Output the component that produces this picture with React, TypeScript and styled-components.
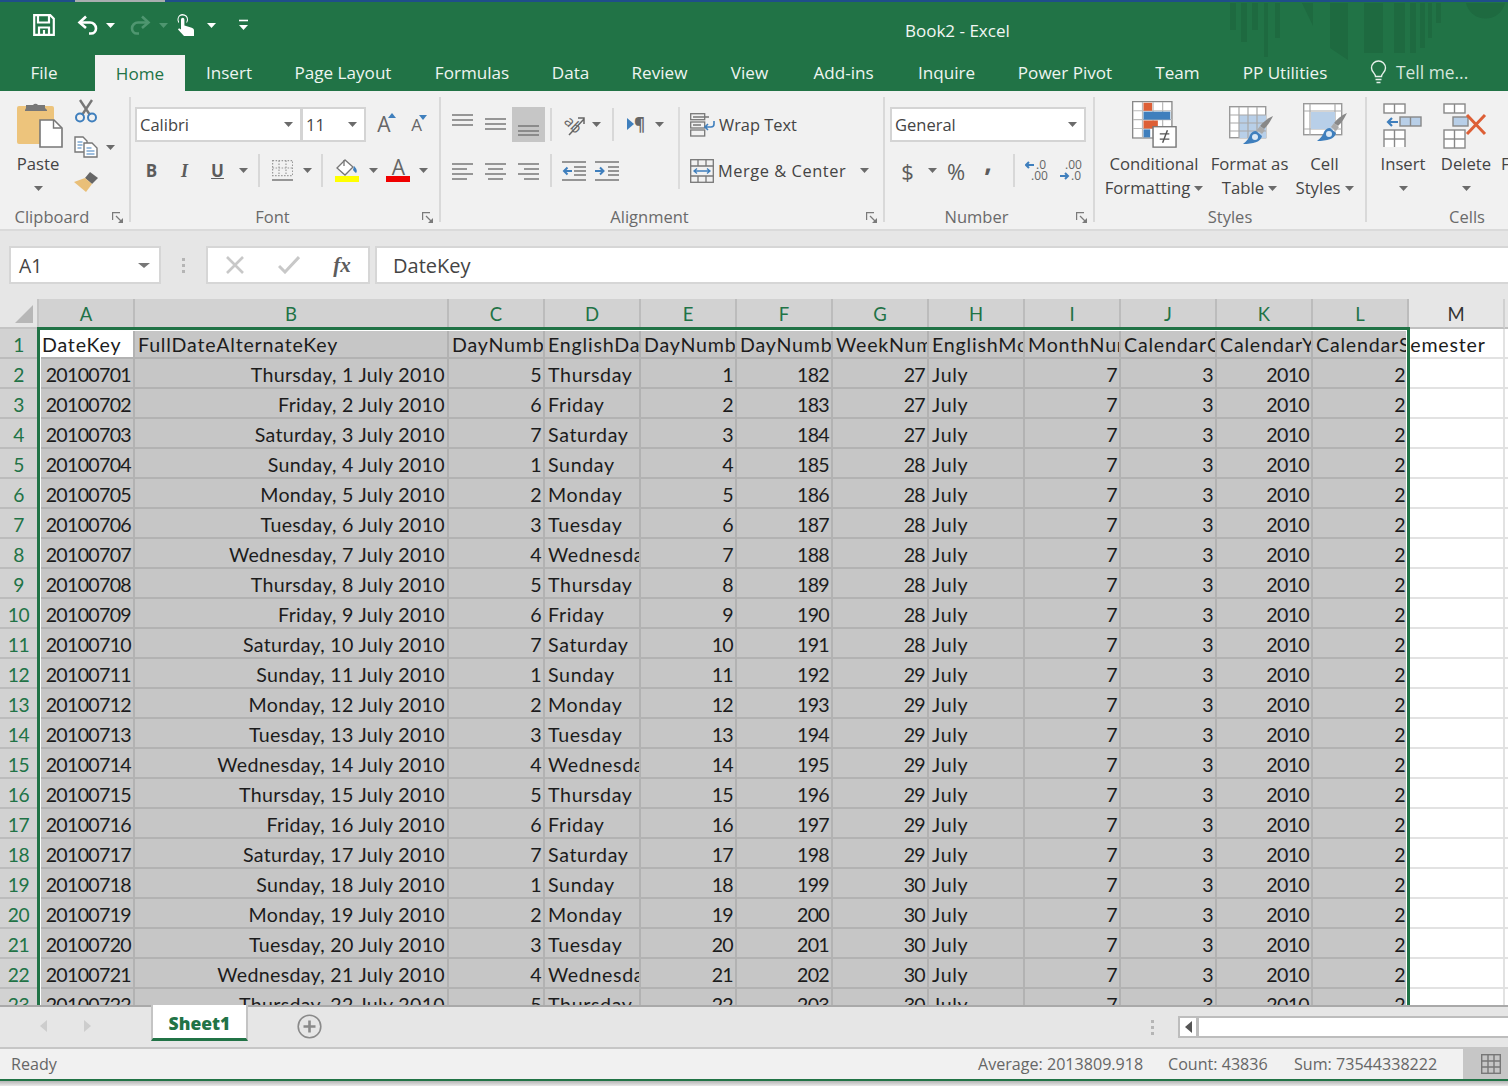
import React from "react";
import styled, { createGlobalStyle } from "styled-components";

const GRAY = "#6b6b6b";
const BLUE = "#3f7fbd";
const UI = `"Open Sans", "Noto Sans", sans-serif`;
const CELL = `Lato, "Liberation Sans", sans-serif`;

const Global = createGlobalStyle`
  html, body { margin: 0; padding: 0; background: #fff; }
  * { box-sizing: border-box; }
`;

const Page = styled.div`
  width: 1508px; height: 1086px; overflow: hidden; display: flex; flex-direction: column;
  font-family: ${UI}; background: #e6e6e6; position: relative;
`;
const TopStrip = styled.div`height: 2px; background: linear-gradient(90deg, #1f4e8a 75px, #a9aeb0 75px, #a9aeb0 165px, #1f4e8a 165px);`;
const TitleBar = styled.div`height: 50px; background: #217346; display: flex; align-items: center; position: relative; flex: none;`;
const Qat = styled.div`width: 250px; display: flex; align-items: center; padding-left: 32px; height: 46px; margin-top: -4px;`;
const Slot = styled.div<{ $w: number }>`
  width: ${(p) => p.$w}px; flex: none; display: flex; align-items: center; justify-content: center; height: 100%;
`;
const Title = styled.div`margin-left: 655px; color: #f2f7f4; font-size: 17px; padding-top: 7px;`;
const Pattern = styled.svg`position: absolute; right: 0; top: 0;`;
const TabBar = styled.div`height: 39px; background: #217346; display: flex; align-items: flex-end; flex: none;`;
const Tab = styled.div<{ $w: number; $active?: boolean }>`
  width: ${(p) => p.$w}px; flex: none; height: ${(p) => (p.$active ? 36 : 39)}px; display: flex; align-items: center; justify-content: center;
  padding-top: ${(p) => (p.$active ? 0 : 2)}px; font-size: 17.1px; white-space: nowrap;
  color: ${(p) => (p.$active ? "#217346" : "#eef5f1")};
  background: ${(p) => (p.$active ? "#f1f1f1" : "transparent")};
`;
const TellMe = styled.div`display: flex; align-items: center; gap: 9px; margin-left: 21px; color: #d5e6dc; font-size: 17.4px; height: 39px; padding-top: 1px;`;

const Ribbon = styled.div`
  height: 140px; background: #f1f1f1; border-bottom: 2px solid #dadada; display: flex; flex: none; overflow: hidden;
`;
const Group = styled.div<{ $w: number }>`
  width: ${(p) => p.$w}px; flex: none; height: 138px; display: flex; flex-direction: column;
`;
const GroupBody = styled.div<{ $pad?: number }>`
  height: 114px; display: flex; padding-left: ${(p) => p.$pad ?? 0}px; flex: none;
`;
const GroupFooter = styled.div`flex: 1; display: flex; align-items: center; padding-bottom: 3px;`;
const GroupLabel = styled.div`flex: 1; text-align: center; font-size: 16.5px; color: #6a6a6a; white-space: nowrap;`;
const Launcher = styled.div`width: 25px; flex: none; display: flex; justify-content: center; padding-left: 2px; padding-top: 2px;`;
const GroupDivider = styled.div`width: 2px; flex: none; margin: 6px 0 7px; background: #d9d9d9;`;
const LargeButton = styled.div<{ $w: number; $top?: number; $lead?: number; $start?: boolean }>`
  width: ${(p) => p.$w}px; flex: none; display: flex; flex-direction: column; align-items: ${(p) => (p.$start ? "flex-start" : "center")}; padding-top: ${(p) => p.$top ?? 10}px;
  margin-left: ${(p) => p.$lead ?? 0}px;
  font-size: 16.7px; line-height: 24px; color: #444; white-space: nowrap;
`;
const LargeIcon = styled.div<{ $h?: number; $shift?: number }>`
  height: ${(p) => p.$h ?? 51}px; display: flex; align-items: flex-start; justify-content: center; margin-left: ${(p) => p.$shift ?? 0}px;
`;
const CaretLine = styled.span`display: flex; align-items: center; gap: 4px; height: 24px;`;
const SmallStack = styled.div`width: 48px; flex: none; margin-left: 12px; display: flex; flex-direction: column; padding-top: 8px; gap: 12px;`;
const SmallRow = styled.div`height: 24px; display: flex; align-items: center; gap: 8px;`;
const Rows = styled.div<{ $w?: number }>`
  ${(p) => (p.$w ? `width:${p.$w}px;flex:none;` : "")} display: flex; flex-direction: column; gap: 11px; padding-top: 16px;
`;
const ToolRow = styled.div`height: 35px; display: flex; align-items: center;`;
const Combo = styled.div<{ $w: number }>`
  width: ${(p) => p.$w}px; flex: none; height: 35px; background: #fff; border: 2px solid #d4d4d4; display: flex; align-items: center; justify-content: space-between;
  padding: 0 7px 0 3px; font-size: 16.5px; color: #444; margin-right: -1px;
`;
const Sep = styled.div`width: 2px; height: 33px; background: #d8d8d8; flex: none;`;
const TallSep = styled.div`width: 2px; height: 82px; background: #dcdcdc; flex: none; margin: 16px 10px 0 0;`;
const Glyph = styled.span<{ $size?: number; $bold?: boolean; $italic?: boolean; $under?: boolean; $serif?: boolean }>`
  font-size: ${(p) => p.$size ?? 18}px; color: #5c5c5c; line-height: 1;
  font-weight: ${(p) => (p.$bold ? 700 : 400)}; font-style: ${(p) => (p.$italic ? "italic" : "normal")};
  font-family: ${(p) => (p.$serif ? `"Liberation Serif", serif` : UI)};
  text-decoration: ${(p) => (p.$under ? "underline" : "none")};
`;
const CommaGlyph = styled(Glyph)`margin-top: -19px;`;
const PasteLabel = styled.span`margin-top: 0;`;
const PasteArt = styled.div`margin-left: 3px;`;
const Highlight = styled.div`width: 33px; height: 35px; background: #c6c6c6; flex: none; display: flex; align-items: center; justify-content: center;`;
const WrapLabel = styled.div`font-size: 16.4px; color: #444; white-space: nowrap; margin-left: 4px;`;
const MergeLabel = styled(WrapLabel)`letter-spacing: 0.55px;`;
const Growing = styled.div`position: relative; display: flex; align-items: center;`;
const GrowTip = styled.svg`position: absolute; right: -5px; top: -1px;`;
const AGlyph = styled(Glyph)`color: #666;`;

const FormulaBar = styled.div`height: 68px; flex: none; display: flex; padding-top: 15px; padding-left: 9px; background: #e6e6e6;`;
const NameBox = styled.div`
  width: 152px; height: 38px; background: #fff; border: 2px solid #d6d6d6; display: flex; align-items: center; justify-content: space-between;
  padding: 0 9px 0 8px; font-size: 19.4px; color: #444;
`;
const Grip = styled.div<{ $h?: number; $w?: number }>`
  width: ${(p) => p.$w ?? 46}px; flex: none; height: ${(p) => p.$h ?? 38}px; display: flex; flex-direction: column; align-items: center; justify-content: center; gap: 3px;
  & > i { display: block; width: 3px; height: 3px; background: #b5b5b5; }
`;
const FxBox = styled.div`
  width: 164px; height: 38px; background: #fff; border: 2px solid #d6d6d6; display: flex; align-items: center; margin-right: 5px; flex: none;
`;
const FormulaInput = styled.div`
  flex: 1; height: 38px; background: #fff; border: 2px solid #d6d6d6; border-right: none; display: flex; align-items: center;
  padding-left: 16px; font-size: 20px; color: #444;
`;

const SheetArea = styled.div`height: 706px; flex: none; overflow: hidden; position: relative; background: #fff;`;
const Grid = styled.div`
  display: grid; grid-template-columns: 39px 96px 314px repeat(11, 96px) 96px; grid-auto-rows: 30px; grid-template-rows: 30px;
  font-family: ${CELL}; font-size: 19.6px; color: #1c1c1c;
`;
const Corner = styled.div`background: #e6e6e6; border-right: 2px solid #c4c4c4; border-bottom: 2px solid #c4c4c4; position: relative; display: flex; justify-content: flex-end; align-items: flex-end; padding: 0 4px 4px 0;`;
const ColHead = styled.div<{ $sel: boolean }>`
  background: ${(p) => (p.$sel ? "#d2d2d2" : "#e6e6e6")};
  color: ${(p) => (p.$sel ? "#217346" : "#333")};
  border-right: 2px solid ${(p) => (p.$sel ? "#bcbcbc" : "#d0d0d0")};
  border-bottom: 2px solid ${(p) => (p.$sel ? "#217346" : "#c0c0c0")};
  display: flex; align-items: center; justify-content: center; font-size: 18.5px; padding-top: 1px;
`;
const RowHead = styled.div`
  background: #d2d2d2; color: #217346; border-bottom: 2px solid #bcbcbc; display: flex; align-items: center; justify-content: center;
  padding: 2px 2px 0 0; font-size: 19.2px; letter-spacing: -0.5px;
`;
type Kind = "num" | "date" | "text" | "head";
const SPACING: Record<Kind, string> = { num: "-0.7px", date: "0.32px", text: "0.65px", head: "0.8px" };
const Cell = styled.div<{ $kind?: Kind; $sel?: boolean; $active?: boolean; $spill?: boolean }>`
  background: ${(p) => (p.$active || !p.$sel ? "#fff" : "#c6c6c6")};
  border-right: 2px solid ${(p) => (p.$sel ? "#b2b2b2" : "#e2e2e2")};
  border-bottom: 2px solid ${(p) => (p.$sel ? "#b2b2b2" : "#e2e2e2")};
  overflow: ${(p) => (p.$spill ? "visible" : "hidden")};
  ${(p) => (p.$spill ? "position: relative; z-index: 1;" : "")}
  white-space: nowrap; display: flex; align-items: center;
  letter-spacing: ${(p) => SPACING[p.$kind ?? "text"]};
  justify-content: ${(p) => (p.$kind === "num" || p.$kind === "date" ? "flex-end" : "flex-start")};
  padding: 2px ${(p) => (p.$kind === "num" || p.$kind === "date" ? 2 : 0)}px 0 3px;
`;
const Selection = styled.div`
  position: absolute; left: 37px; top: 28px; width: 1373px; height: 700px; border: 3px solid #217346; z-index: 2; pointer-events: none;
  box-shadow: inset 0 0 0 1px #fff;
`;

const SheetTabs = styled.div`height: 42px; flex: none; background: #e6e6e6; border-top: 2px solid #a9a9a9; display: flex; align-items: flex-start;`;
const NavArrows = styled.div`width: 151px; flex: none; height: 38px; display: flex; align-items: center; padding-left: 40px; gap: 37px;`;
const SheetTab = styled.div`
  width: 97px; height: 36px; flex: none; background: #fff; border-right: 2px solid #c4c4c4; border-left: 2px solid #c4c4c4; border-bottom: 3px solid #217346;
  display: flex; align-items: center; justify-content: center; font-weight: 800; color: #217346; font-size: 17.5px; margin-top: -2px; padding-top: 3px;
`;
const AddSheet = styled.div`width: 125px; flex: none; height: 38px; display: flex; align-items: center; padding-left: 49px;`;
const Spacer = styled.div`flex: 1;`;
const ScrollBar = styled.div`
  width: 330px; height: 22px; flex: none; margin-top: 9px; background: #fff; border: 2px solid #bdbdbd; border-right: none; display: flex; align-items: center;
`;
const ScrollBtn = styled.div`width: 19px; height: 100%; border-right: 3px solid #bdbdbd; display: flex; align-items: center; justify-content: center;`;
const StatusBar = styled.div`height: 32px; flex: none; background: #f1f1f1; border-top: 2px solid #c6c6c6; display: flex; align-items: center; font-size: 16.1px; color: #666; padding-left: 11px;`;
const StatusRight = styled.div`margin-left: auto; display: flex; align-items: center; height: 100%;`;
const StatusItem = styled.span<{ $w: number }>`width: ${(p) => p.$w}px; white-space: nowrap;`;
const ViewBtn = styled.div`width: 45px; height: 100%; background: #c6c6c6; display: flex; align-items: center; justify-content: center; padding-left: 11px;`;
const BottomEdge = styled.div`height: 7px; flex: none; border-top: 2px solid #217346; background: linear-gradient(#b5b5b5, #e8e8e8);`;
const RedoArt = styled.div`transform: scaleX(-1); display: flex;`;

/* icons */
const Caret = ({ c = GRAY, w = 9 }: { c?: string; w?: number }) => (
  <svg width={w} height={5} viewBox="0 0 9 5" preserveAspectRatio="none"><path d="M0 0h9L4.500 5z" fill={c} /></svg>
);
const SaveIcon = () => (
  <svg width="22" height="22" viewBox="0 0 22 22" fill="none" stroke="#fff" strokeWidth="2.200">
    <path d="M1.200 1.200h16l3.600 3.600v16H1.200z" /><path d="M5 1.500v7h11v-7" /><path d="M6 20.500v-7h10v7" /><path d="M11 16v4" />
  </svg>
);
const UndoIcon = ({ c = "#fff" }: { c?: string }) => (
  <svg width="22" height="20" viewBox="0 0 22 20" fill="none" stroke={c} strokeWidth="2.600">
    <path d="M9 1.500 2.500 7.500 9 13" /><path d="M3 7.500h10a6 6 0 0 1 6 6 5 5 0 0 1-5 5h-2" />
  </svg>
);
const TouchIcon = () => (
  <svg width="20" height="24" viewBox="0 0 20 24" fill="#fff">
    <path d="M6.500 1a5.500 5.500 0 0 1 5.500 5.500c0 1.500-.6 2.800-1.500 3.800V8.600c.3-.6.500-1.300.500-2A4.500 4.500 0 0 0 6.500 2.500 4 4 0 0 0 2.500 6.500c0 .7.200 1.400.500 2v1.700A5.500 5.500 0 0 1 6.500 1z" />
    <path d="M5 6.500a1.700 1.700 0 0 1 3.400 0v6l6.600 2c1.700.6 3 1.200 3 3V23H8l-6-6.500 1-1.300 2 1.200z" />
  </svg>
);
const CustomizeIcon = () => (
  <svg width="9" height="12" viewBox="0 0 9 12"><path d="M0 1.500h9" stroke="#fff" strokeWidth="1.600" /><path d="M0 6h9l-4.500 5z" fill="#fff" /></svg>
);
const Bulb = () => (
  <svg width="17" height="24" viewBox="0 0 17 24" fill="none" stroke="#e6f0ea" strokeWidth="1.400">
    <path d="M5.500 16.500c0-3-4-4.500-4-8.500a7 7 0 0 1 14 0c0 4-4 5.500-4 8.500z" /><path d="M5.500 19.500h6M6.500 22.500h4" />
  </svg>
);
const PasteIcon = () => (
  <svg width="46" height="47" viewBox="0 0 46 47">
    <rect x="0" y="5" width="37" height="38" rx="2" fill="#edc47c" />
    <path d="M9 7V4h7a3 3 0 0 1 5 0h7v3l2 2v1H8V9z" fill="#777" />
    <path d="M23 19h14l8 8v19H23z" fill="#fff" stroke="#777" strokeWidth="1.600" />
    <path d="M36.500 19v8h8" fill="none" stroke="#777" strokeWidth="1.400" />
  </svg>
);
const ScissorsIcon = () => (
  <svg width="24" height="24" viewBox="0 0 24 24" fill="none">
    <path d="M6 1l10 15M18 1 8 16" stroke="#777" strokeWidth="2.400" />
    <circle cx="6" cy="18.500" r="4" stroke={BLUE} strokeWidth="2" /><circle cx="18" cy="18.500" r="4" stroke={BLUE} strokeWidth="2" />
  </svg>
);
const CopyIcon = () => (
  <svg width="24" height="22" viewBox="0 0 24 22" fill="#fff" stroke="#777" strokeWidth="1.400">
    <path d="M1 1h8l4 4v11H1z" /><path d="M10 7h8l5 5v9H10z" />
    <path d="M3.500 6h5M3.500 9h5M3.500 12h4M12.500 12h5M12.500 15h8M12.500 18h8" stroke={BLUE} strokeWidth="1.200" />
  </svg>
);
const BrushIcon = () => (
  <svg width="25" height="24" viewBox="0 0 25 24">
    <path d="M16 1l8 6-6 6-7-6z" fill="#666" /><path d="M11 7l7 6-6 8L0 11z" fill="#e9bf78" />
  </svg>
);
const LauncherIcon = () => (
  <svg width="12" height="12" viewBox="0 0 12 12" fill="none" stroke="#7a7a7a" strokeWidth="1.200">
    <path d="M.6 8V.6h7.400" /><path d="M4 4l6 6" /><path d="M11 6v5H6z" fill="#7a7a7a" stroke="none" />
  </svg>
);
const BigA = ({ s, up }: { s: number; up?: boolean }) => (
  <Growing>
    <AGlyph $size={s}>A</AGlyph>
    <GrowTip width="8" height="5" viewBox="0 0 8 5">
      <path d={up ? "M0 5h8L4 0z" : "M0 0h8L4 5z"} fill={BLUE} />
    </GrowTip>
  </Growing>
);
const BordersIcon = () => (
  <svg width="21" height="21" viewBox="0 0 21 21" fill="none" stroke="#999" strokeWidth="1.200" strokeDasharray="1.500 1.500">
    <path d="M.6.6h20v15h-20zM7 .6v15M14 .6v15M.6 8h20" /><path d="M0 20h21" stroke="#777" strokeDasharray="none" strokeWidth="1.500" />
  </svg>
);
const FillIcon = () => (
  <svg width="25" height="23" viewBox="0 0 25 23">
    <path d="M10 1 2 9l8 7 8-8z" fill="#fff" stroke="#777" strokeWidth="1.300" />
    <path d="M9 1v6" stroke="#777" strokeWidth="1.300" />
    <path d="M19 7c2 2 4 5 2 7-1.500-1-2-2-3-3z" fill={BLUE} />
    <rect x="0" y="17" width="24" height="6" fill="#ffff00" />
  </svg>
);
const ColorA = () => (
  <svg width="25" height="24" viewBox="0 0 25 24">
    <text x="12.500" y="16" textAnchor="middle" fontSize="21" fontFamily={UI} fill="#666">A</text>
    <rect x="0" y="17" width="24" height="6" fill="#f00000" />
  </svg>
);
const Lines = ({ ys, xs }: { ys: number[]; xs?: [number, number][] }) => (
  <svg width="22" height="22" viewBox="0 0 22 22" stroke="#777" strokeWidth="1.500">
    {ys.map((y, i) => {
      const x = xs ? xs[i] : ([0, 21] as [number, number]);
      return <path key={y} d={`M${x[0]} ${y}H${x[1]}`} />;
    })}
  </svg>
);
const Orient = () => (
  <svg width="26" height="24" viewBox="0 0 26 24">
    <text x="2" y="14" fontSize="15" fontFamily={UI} fill="#666" transform="rotate(45 8 12)">ab</text>
    <path d="M8 22 23 6M17 5h6v6" fill="none" stroke="#666" strokeWidth="1.500" />
  </svg>
);
const IndentIcon = ({ out }: { out?: boolean }) => (
  <svg width="25" height="20" viewBox="0 0 25 20" fill="none" stroke="#777" strokeWidth="1.500">
    <path d="M0 1h24M0 19h24" />
    {out ? <path d="M12 6h12M12 10h12M12 14h12" /> : <path d="M13 6h11M13 10h11M13 14h11" />}
    {out ? <path d="M10 10H2M5.500 6.500 2 10l3.500 3.500" stroke={BLUE} strokeWidth="2" /> : <path d="M0 10h8M5 6.500 8.500 10 5 13.500" stroke={BLUE} strokeWidth="2" />}
  </svg>
);
const WrapIcon = () => (
  <svg width="25" height="24" viewBox="0 0 25 24" fill="none" stroke="#777" strokeWidth="1.300">
    <rect x=".7" y=".7" width="14" height="6" /><rect x=".7" y="9" width="14" height="6" /><rect x=".7" y="17" width="14" height="6" />
    <path d="M3 12h8M3 4h16" /><path d="M24 8v3a3 3 0 0 1-3 3h-6M18 11l-3 3 3 3" stroke={BLUE} strokeWidth="1.600" />
  </svg>
);
const MergeIcon = () => (
  <svg width="24" height="24" viewBox="0 0 24 24" fill="none" stroke="#777" strokeWidth="1.300">
    <rect x=".7" y=".7" width="22.600" height="22.600" /><path d="M.7 7h22.600M.7 17h22.600M8 .7V7M16 .7V7M8 17v6M16 17v6" />
    <path d="M4 12h16M7 9.500 4 12l3 2.500M17 9.500l3 2.500-3 2.500" stroke={BLUE} strokeWidth="1.300" />
  </svg>
);
const DecIcon = ({ more }: { more?: boolean }) => (
  <svg width="24" height="24" viewBox="0 0 24 24">
    <text x={more ? 6 : 11} y="10" fontSize="12" fontFamily={UI} fill="#666">{more ? ".00" : ".0"}</text>
    <text x={more ? 12 : 6} y="21" fontSize="12" fontFamily={UI} fill="#666">{more ? ".0" : ".00"}</text>
    <path d={more ? "M1 17h8M6 14l3 3-3 3" : "M9 6H1M4 3 1 6l3 3"} fill="none" stroke={BLUE} strokeWidth="2" />
  </svg>
);
const CondIcon = () => (
  <svg width="45" height="47" viewBox="0 0 47 53" preserveAspectRatio="none" fill="none">
    <rect x=".7" y=".7" width="41" height="41" fill="#fff" stroke="#888" strokeWidth="1.400" />
    <path d="M11 1v40M22 1v40M32 1v40M1 11h41M1 21h41M1 31h41" stroke="#bbb" strokeWidth="1.300" />
    <rect x="12" y="2" width="9" height="9" fill="#dd5f36" /><rect x="12" y="12" width="28" height="9" fill={BLUE} />
    <rect x="12" y="22" width="15" height="9" fill="#dd5f36" /><rect x="12" y="32" width="7" height="9" fill={BLUE} />
    <rect x="22" y="29" width="24" height="23" fill="#fff" stroke="#777" strokeWidth="1.500" />
    <path d="M29 37h10M29 43h10M37 33l-5 14" stroke="#555" strokeWidth="1.500" />
  </svg>
);
const BrushTip = ({ x, y }: { x: number; y: number }) => (
  <g transform={`translate(${x} ${y})`}>
    <path d="M30 0c-3 6-5 9-9 13l-4-3c3-4 8-8 13-10z" fill="#888" />
    <path d="M17 10l5 4-3 4-5-4z" fill="#aaa" />
    <path d="M13 15l6 5c-1 6-9 8-19 8 4-3 6-6 7-9 1-2 3-4 6-4z" fill={BLUE} />
    <circle cx="12" cy="21" r="3" fill="#dbe8f5" />
  </g>
);
const TableIcon = () => (
  <svg width="47" height="44" viewBox="0 0 47 44" fill="none">
    <rect x=".7" y=".7" width="36" height="31" fill="#fff" stroke="#999" strokeWidth="1.400" />
    <rect x="10" y="9" width="27" height="23" fill="#b8cfe8" />
    <path d="M10 1v31M19 1v31M28 1v31M1 9h36M1 17h36M1 25h36" stroke="#a8a8a8" strokeWidth="1.200" />
    <BrushTip x={14} y={10} />
  </svg>
);
const CellStyleIcon = () => (
  <svg width="47" height="44" viewBox="0 0 47 44" fill="none">
    <rect x=".7" y=".7" width="38" height="31" fill="#fff" stroke="#999" strokeWidth="1.400" />
    <path d="M7 1v31M32 1v31M1 8h38M1 26h38" stroke="#aaa" strokeWidth="1.200" />
    <rect x="8" y="9" width="24" height="17" fill="#b8cfe8" />
    <BrushTip x={14} y={10} />
  </svg>
);
const SmallTable = ({ x, y, w = 21, h = 9, c = 2, r = 1, fill = "#fff" }: { x: number; y: number; w?: number; h?: number; c?: number; r?: number; fill?: string }) => (
  <g stroke="#888" strokeWidth="1.400" fill={fill}>
    <rect x={x} y={y} width={w} height={h * r} />
    {Array.from({ length: c - 1 }).map((_, i) => <path key={i} d={`M${x + (w * (i + 1)) / c} ${y}v${h * r}`} />)}
    {Array.from({ length: r - 1 }).map((_, i) => <path key={i} d={`M${x} ${y + h * (i + 1)}h${w}`} />)}
  </g>
);
const InsertIcon = () => (
  <svg width="40" height="44" viewBox="0 0 40 44" fill="none">
    <SmallTable x={1} y={1} />
    <path d="M15 19H5M9 15l-4 4 4 4" stroke={BLUE} strokeWidth="2.200" />
    <SmallTable x={17} y={14} fill="#b8cfe8" />
    <SmallTable x={1} y={27} r={2} />
  </svg>
);
const DeleteIcon = () => (
  <svg width="46" height="46" viewBox="0 0 46 46" fill="none">
    <SmallTable x={1} y={1} />
    <rect x="10" y="14" width="15" height="9" fill="#b8cfe8" stroke="#888" strokeWidth="1.400" />
    <SmallTable x={1} y={27} r={2} />
    <path d="M24 12l18 19M42 12 24 31" stroke="#dd5f36" strokeWidth="3" />
  </svg>
);
const CloseIcon = () => <svg width="18" height="18" viewBox="0 0 18 18"><path d="M1 1l16 16M17 1 1 17" stroke="#c8c8c8" strokeWidth="2.600" /></svg>;
const CheckIcon = () => <svg width="22" height="18" viewBox="0 0 22 18"><path d="M1 10l6 6L21 1" fill="none" stroke="#c8c8c8" strokeWidth="3" /></svg>;
const CornerTri = () => <svg width="18" height="18" viewBox="0 0 18 18"><path d="M18 0v18H0z" fill="#b7b7b7" /></svg>;
const NavArrow = ({ right }: { right?: boolean }) => (
  <svg width="7" height="12" viewBox="0 0 7 12"><path d={right ? "M0 0l7 6-7 6z" : "M7 0 0 6l7 6z"} fill="#cdcdcd" /></svg>
);
const PlusIcon = () => (
  <svg width="25" height="25" viewBox="0 0 25 25" fill="none" stroke="#8a8a8a">
    <circle cx="12.500" cy="12.500" r="11.300" strokeWidth="1.600" /><path d="M12.500 6.500v12M6.500 12.500h12" strokeWidth="2.600" />
  </svg>
);
const GridView = () => (
  <svg width="20" height="20" viewBox="0 0 20 20" fill="none" stroke="#777" strokeWidth="1.400">
    <rect x=".7" y=".7" width="18.600" height="18.600" /><path d="M7 1v18M13 1v18M1 7h18M1 13h18" />
  </svg>
);

/* data */
const LETTERS = "ABCDEFGHIJKLMN".split("");
const HEAD = ["DateKey", "FullDateAlternateKey", "DayNumberOfWeek", "EnglishDayNameOfWeek", "DayNumberOfMonth", "DayNumberOfYear", "WeekNumberOfYear", "EnglishMonthName", "MonthNumberOfYear", "CalendarQuarter", "CalendarYear", "CalendarSemester"];
const DAYS = ["Sunday", "Monday", "Tuesday", "Wednesday", "Thursday", "Friday", "Saturday"];
const TABS: [string, number][] = [["File", 88], ["", 7], ["Home", 90], ["Insert", 88], ["Page Layout", 140], ["Formulas", 118], ["Data", 79], ["Review", 99], ["View", 81], ["Add-ins", 107], ["Inquire", 99], ["Power Pivot", 138], ["Team", 87], ["PP Utilities", 128]];

const rows = Array.from({ length: 23 }).map((_, i) => {
  const day = i + 1;
  const dow = (day + 3) % 7;
  const week = day <= 3 ? 27 : day <= 10 ? 28 : day <= 17 ? 29 : 30;
  return [String(20100701 + i), `${DAYS[dow]}, ${day} July 2010`, String(dow + 1), DAYS[dow], String(day), String(182 + i), String(week), "July", "7", "3", "2010", "2"];
});
const kindOf = (ci: number): Kind => (ci === 1 ? "date" : ci === 3 || ci === 7 ? "text" : "num");

export default function App() {
  return (
    <Page>
      <Global />
      <TopStrip />
      <TitleBar>
        <Qat>
          <Slot $w={24}><SaveIcon /></Slot>
          <Slot $w={21} />
          <Slot $w={22}><UndoIcon /></Slot>
          <Slot $w={22}><Caret c="#fff" /></Slot>
          <Slot $w={8} />
          <Slot $w={22}><RedoArt><UndoIcon c="#4f9670" /></RedoArt></Slot>
          <Slot $w={24}><Caret c="#4f9670" /></Slot>
          <Slot $w={22}><TouchIcon /></Slot>
          <Slot $w={28}><Caret c="#fff" /></Slot>
          <Slot $w={14} />
          <Slot $w={9}><CustomizeIcon /></Slot>
        </Qat>
        <Title>Book2 - Excel</Title>
        <Pattern width="278" height="66" viewBox="0 0 278 66" fill="#1e6a40">
          <path d="M0 1h6v27H0zM11 1h6v39h-6zM22 1h6v27h-6zM34 1h4v54h-4zM45 1h5v35h-5zM72 1h11L83 24zM100 1h18v57l-18-12zM134 1h19v50h-19zM164 1h11v50h-11zM180 1h6v50h-6zM190 1h5v45h-5zM198 1h4v35h-4zM206 1h5v20h-5zM236 1h39a20 20 0 0 1-39 0z" />
        </Pattern>
      </TitleBar>
      <TabBar>
        {TABS.map(([t, w], i) => (
          <Tab key={i} $w={w} $active={t === "Home"}>{t}</Tab>
        ))}
        <TellMe><Bulb />Tell me...</TellMe>
      </TabBar>
      <Ribbon>
        <Group $w={129}>
          <GroupBody $pad={14}>
            <LargeButton $w={48}>
              <LargeIcon><PasteArt><PasteIcon /></PasteArt></LargeIcon>
              <PasteLabel>Paste</PasteLabel>
              <CaretLine><Caret /></CaretLine>
            </LargeButton>
            <SmallStack>
              <SmallRow><ScissorsIcon /></SmallRow>
              <SmallRow><CopyIcon /><Caret /></SmallRow>
              <SmallRow><BrushIcon /></SmallRow>
            </SmallStack>
          </GroupBody>
          <GroupFooter><GroupLabel>Clipboard</GroupLabel><Launcher><LauncherIcon /></Launcher></GroupFooter>
        </Group>
        <GroupDivider />
        <Group $w={308}>
          <GroupBody $pad={4}>
            <Rows>
              <ToolRow>
                <Combo $w={167}>Calibri<Caret /></Combo>
                <Combo $w={65}>11<Caret /></Combo>
                <Slot $w={38}><BigA s={21} up /></Slot>
                <Slot $w={27}><BigA s={17} /></Slot>
              </ToolRow>
              <ToolRow>
                <Slot $w={33}><Glyph $bold $size={17}>B</Glyph></Slot>
                <Slot $w={33}><Glyph $italic $serif $bold $size={18}>I</Glyph></Slot>
                <Slot $w={33}><Glyph $bold $under $size={17}>U</Glyph></Slot>
                <Slot $w={19}><Caret /></Slot>
                <Slot $w={5} />
                <Sep />
                <Slot $w={11} />
                <Slot $w={22}><BordersIcon /></Slot>
                <Slot $w={28}><Caret /></Slot>
                <Slot $w={2}><Sep /></Slot>
                <Slot $w={12} />
                <Slot $w={25}><FillIcon /></Slot>
                <Slot $w={26}><Caret /></Slot>
                <Slot $w={25}><ColorA /></Slot>
                <Slot $w={25}><Caret /></Slot>
              </ToolRow>
            </Rows>
          </GroupBody>
          <GroupFooter><GroupLabel>Font</GroupLabel><Launcher><LauncherIcon /></Launcher></GroupFooter>
        </Group>
        <GroupDivider />
        <Group $w={442}>
          <GroupBody $pad={5}>
            <Rows $w={232}>
              <ToolRow>
                <Slot $w={33}><Lines ys={[1, 6, 11]} /></Slot>
                <Slot $w={33}><Lines ys={[5, 10, 15]} /></Slot>
                <Highlight><Lines ys={[12, 17, 21]} /></Highlight>
                <Slot $w={5} /><Sep />
                <Slot $w={9} />
                <Slot $w={26}><Orient /></Slot>
                <Slot $w={18}><Caret /></Slot>
                <Slot $w={7} /><Sep />
                <Slot $w={13} />
                <Slot $w={21}><svg width="21" height="20" viewBox="0 0 21 20"><path d="M0 3l7 6-7 6z" fill={BLUE} /><text x="7" y="16" fontSize="17" fontFamily={UI} fontWeight="700" fill="#666">¶</text></svg></Slot>
                <Slot $w={23}><Caret /></Slot>
              </ToolRow>
              <ToolRow>
                <Slot $w={33}><Lines ys={[4, 9, 14, 19]} xs={[[0, 21], [0, 15], [0, 21], [0, 15]]} /></Slot>
                <Slot $w={33}><Lines ys={[4, 9, 14, 19]} xs={[[0, 21], [3, 18], [0, 21], [3, 18]]} /></Slot>
                <Slot $w={33}><Lines ys={[4, 9, 14, 19]} xs={[[0, 21], [6, 21], [0, 21], [6, 21]]} /></Slot>
                <Slot $w={5} /><Sep />
                <Slot $w={9} />
                <Slot $w={26}><IndentIcon out /></Slot>
                <Slot $w={7} />
                <Slot $w={26}><IndentIcon /></Slot>
              </ToolRow>
            </Rows>
            <TallSep />
            <Rows>
              <ToolRow><WrapIcon /><WrapLabel>Wrap Text</WrapLabel></ToolRow>
              <ToolRow><MergeIcon /><MergeLabel>Merge &amp; Center</MergeLabel><Slot $w={37}><Caret /></Slot></ToolRow>
            </Rows>
          </GroupBody>
          <GroupFooter><GroupLabel>Alignment</GroupLabel><Launcher><LauncherIcon /></Launcher></GroupFooter>
        </Group>
        <GroupDivider />
        <Group $w={208}>
          <GroupBody $pad={5}>
            <Rows>
              <ToolRow><Combo $w={196}>General<Caret /></Combo></ToolRow>
              <ToolRow>
                <Slot $w={35}><Glyph $size={22}>$</Glyph></Slot>
                <Slot $w={14}><Caret /></Slot>
                <Slot $w={34}><Glyph $size={22}>%</Glyph></Slot>
                <Slot $w={30}><CommaGlyph $bold $size={27}>,</CommaGlyph></Slot>
                <Slot $w={10} />
                <Sep />
                <Slot $w={10} />
                <Slot $w={24}><DecIcon /></Slot>
                <Slot $w={10} />
                <Slot $w={24}><DecIcon more /></Slot>
              </ToolRow>
            </Rows>
          </GroupBody>
          <GroupFooter><GroupLabel>Number</GroupLabel><Launcher><LauncherIcon /></Launcher></GroupFooter>
        </Group>
        <GroupDivider />
        <Group $w={270}>
          <GroupBody $pad={6}>
            <LargeButton $w={106}>
              <LargeIcon $h={51}><CondIcon /></LargeIcon>
              <span>Conditional</span>
              <CaretLine>Formatting<Caret /></CaretLine>
            </LargeButton>
            <LargeButton $w={85} $top={15}>
              <LargeIcon $h={46} $shift={6}><TableIcon /></LargeIcon>
              <span>Format as</span>
              <CaretLine>Table<Caret /></CaretLine>
            </LargeButton>
            <LargeButton $w={65} $top={12}>
              <LargeIcon $h={49} $shift={4}><CellStyleIcon /></LargeIcon>
              <span>Cell</span>
              <CaretLine>Styles<Caret /></CaretLine>
            </LargeButton>
          </GroupBody>
          <GroupFooter><GroupLabel>Styles</GroupLabel></GroupFooter>
        </Group>
        <GroupDivider />
        <Group $w={200}>
          <GroupBody $pad={5}>
            <LargeButton $w={62} $top={12}>
              <LargeIcon $h={49}><InsertIcon /></LargeIcon>
              <span>Insert</span>
              <CaretLine><Caret /></CaretLine>
            </LargeButton>
            <LargeButton $w={64} $top={12}>
              <LargeIcon $h={49}><DeleteIcon /></LargeIcon>
              <span>Delete</span>
              <CaretLine><Caret /></CaretLine>
            </LargeButton>
            <LargeButton $w={30} $top={61} $lead={3} $start>
              <span>Format</span>
            </LargeButton>
          </GroupBody>
          <GroupFooter><GroupLabel>Cells</GroupLabel></GroupFooter>
        </Group>
      </Ribbon>
      <FormulaBar>
        <NameBox>A1<Caret c="#777" w={12} /></NameBox>
        <Grip $w={45}><i /><i /><i /></Grip>
        <FxBox>
          <Slot $w={54}><CloseIcon /></Slot>
          <Slot $w={54}><CheckIcon /></Slot>
          <Slot $w={52}><Glyph $serif $italic $bold $size={21}>fx</Glyph></Slot>
        </FxBox>
        <FormulaInput>DateKey</FormulaInput>
      </FormulaBar>
      <SheetArea>
        <Grid>
          <Corner><CornerTri /></Corner>
          {LETTERS.map((l, i) => <ColHead key={l} $sel={i < 12}>{i < 13 ? l : ""}</ColHead>)}
          <RowHead>1</RowHead>
          {HEAD.map((h, i) => (
            <Cell key={h} $kind="head" $sel $active={i === 0} $spill={i === 11}>{h}</Cell>
          ))}
          <Cell /><Cell />
          {rows.map((r, ri) => (
            <React.Fragment key={ri}>
              <RowHead>{ri + 2}</RowHead>
              {r.map((v, ci) => (
                <Cell key={ci} $sel $kind={kindOf(ci)}>{v}</Cell>
              ))}
              <Cell /><Cell />
            </React.Fragment>
          ))}
        </Grid>
        <Selection />
      </SheetArea>
      <SheetTabs>
        <NavArrows><NavArrow /><NavArrow right /></NavArrows>
        <SheetTab>Sheet1</SheetTab>
        <AddSheet><PlusIcon /></AddSheet>
        <Spacer />
        <Grip $h={40} $w={52}><i /><i /><i /></Grip>
        <ScrollBar><ScrollBtn><svg width="7" height="12" viewBox="0 0 7 12"><path d="M7 0 0 6l7 6z" fill="#555" /></svg></ScrollBtn></ScrollBar>
      </SheetTabs>
      <StatusBar>
        Ready
        <StatusRight>
          <StatusItem $w={190}>Average: 2013809.918</StatusItem>
          <StatusItem $w={126}>Count: 43836</StatusItem>
          <StatusItem $w={169}>Sum: 73544338222</StatusItem>
          <ViewBtn><GridView /></ViewBtn>
        </StatusRight>
      </StatusBar>
      <BottomEdge />
    </Page>
  );
}
